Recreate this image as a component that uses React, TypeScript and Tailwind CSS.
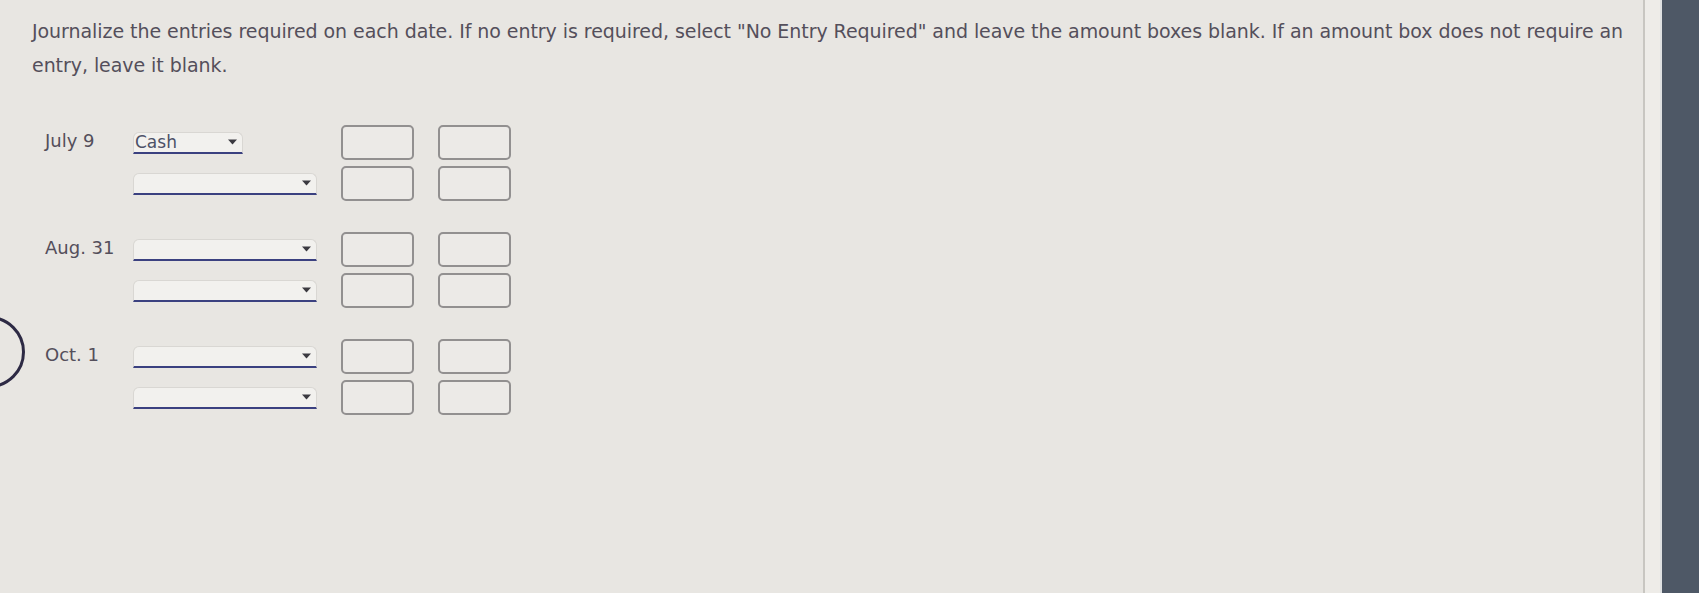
import React from "react";

type Line = { account?: string };
type Entry = { date: string; lines: Line[] };

const entries: Entry[] = [
  { date: "July 9", lines: [{ account: "Cash" }, {}] },
  { date: "Aug. 31", lines: [{}, {}] },
  { date: "Oct. 1", lines: [{}, {}] },
];

function Caret() {
  return (
    <svg width="9" height="6" viewBox="0 0 9 6" className="shrink-0">
      <path d="M0 0.5 L9 0.5 L4.5 5.5 Z" fill="#3b3a40" />
    </svg>
  );
}

function AccountSelect({ account }: { account?: string }) {
  return (
    <div
      className={`flex h-[22px] items-center justify-between rounded-t-[6px] border border-b-2 border-[#d9d7d3] border-b-[#3b4180] bg-[#f2f1ee] pl-[1px] pr-[5px] ${
        account ? "w-[110px]" : "w-[184px]"
      }`}
    >
      <span className="text-[17px] leading-none text-[#4d5268]">{account ?? ""}</span>
      <Caret />
    </div>
  );
}

function AmountBox() {
  return <div className="h-[35px] w-[73px] rounded-[5px] border-2 border-[#929090] bg-[#eceae7]" />;
}

export default function App() {
  return (
    <div
      className="relative flex h-[593px] w-[1699px] overflow-hidden bg-[#e8e6e2]"
      style={{ fontFamily: '"DejaVu Sans", Verdana, sans-serif' }}
    >
      <div className="w-[1643px] shrink-0 pl-[32px] pt-[14px] text-[#544f5b]">
        <p className="text-[19px] leading-[34px] tracking-[-0.06px]">
          Journalize the entries required on each date. If no entry is required, select "No Entry Required" and leave
          the amount boxes blank. If an amount box does not require an
          <br />
          entry, leave it blank.
        </p>

        <div className="mt-[43px] flex flex-col gap-[31px] pl-[13px]">
          {entries.map((entry) => (
            <div key={entry.date} className="flex flex-col gap-[6px]">
              {entry.lines.map((line, i) => (
                <div key={i} className="flex h-[35px] items-center">
                  <div className="mb-[4px] w-[88px] text-[18px] leading-none text-[#544f5b]">
                    {i === 0 ? entry.date : ""}
                  </div>
                  <div className="w-[208px]">
                    <AccountSelect account={line.account} />
                  </div>
                  <div className="flex gap-[24px]">
                    <AmountBox />
                    <AmountBox />
                  </div>
                </div>
              ))}
            </div>
          ))}
        </div>
      </div>

      <div className="w-[2px] shrink-0 bg-[#c8c6c1]" />
      <div className="w-[15px] shrink-0 bg-[#eeece8]" />
      <div className="w-[2px] shrink-0 bg-[#dfe1e2]" />
      <div className="flex-1 bg-[#4e5866]" />

      <div className="absolute left-[-47px] top-[316px] h-[72px] w-[72px] rounded-full border-[3px] border-[#2d2a44]" />
    </div>
  );
}
